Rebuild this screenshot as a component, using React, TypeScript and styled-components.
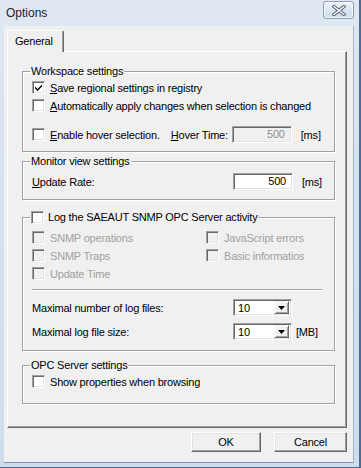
import React from 'react';
import styled, {createGlobalStyle} from "styled-components";

const GlobalStyle = createGlobalStyle`
  html, body {
    margin: 0;
    padding: 0;
    background: #ffffff;
  }
  body {
    font-family: "Liberation Sans", Arial, sans-serif;
    font-size: 11px;
    letter-spacing: -0.2px;
    color: #000000;
  }
`;

interface CheckProps {
  checked?: boolean,
  disabled?: boolean,
}

const CheckBox: React.FC<CheckProps> = ({checked, disabled}) => (
  <CheckBoxBox disabled={disabled}>
    {checked &&
      <svg width="9" height="9" viewBox="0 0 9 9">
        <path d="M1 3.5 L3.5 6 L8 1.5 L8 3.5 L3.5 8 L1 5.5 Z" fill="#000"/>
      </svg>
    }
  </CheckBoxBox>
);

const DropArrow = () => (
  <svg width="7" height="4" viewBox="0 0 7 4">
    <path d="M0 0 H7 L3.5 4 Z" fill="#000"/>
  </svg>
);

const Combo: React.FC<{value: string}> = ({value}) => (
  <ComboBox>
    <ComboText>{value}</ComboText>
    <ComboButton><DropArrow/></ComboButton>
  </ComboBox>
);

const App: React.FC = () => {
  return (
    <>
      <GlobalStyle/>
      <Frame>
        <TitleBar>
          <Title>Options</Title>
          <CloseButton>
            <svg width="14" height="11" viewBox="0 0 14 11">
              <path d="M2 1.5 L12 9.5 M12 1.5 L2 9.5" stroke="#4c5d73" strokeWidth="3.4" strokeLinecap="square" fill="none"/>
              <path d="M2 1.5 L12 9.5 M12 1.5 L2 9.5" stroke="#ffffff" strokeWidth="1.5" strokeLinecap="square" fill="none"/>
            </svg>
          </CloseButton>
        </TitleBar>

        <Client>
          <TabStrip>
            <Tab>General</Tab>
          </TabStrip>

          <TabPanel>
            <Group height={88} gapTop={12}>
              <Legend>Workspace settings</Legend>
              <CheckRow>
                <CheckBox checked/>
                <Label><u>S</u>ave regional settings in registry</Label>
              </CheckRow>
              <CheckRow>
                <CheckBox/>
                <Label><u>A</u>utomatically apply changes when selection is changed</Label>
              </CheckRow>
              <FieldRow gapTop={11}>
                <CheckBox/>
                <Label><u>E</u>nable hover selection.</Label>
                <InlineLabel><u>H</u>over Time:</InlineLabel>
                <NumberInput disabled>500</NumberInput>
                <Unit>[ms]</Unit>
              </FieldRow>
            </Group>

            <Group height={46} gapTop={2}>
              <Legend>Monitor view settings</Legend>
              <FieldRow gapTop={4}>
                <FieldLabel width={196}><u>U</u>pdate Rate:</FieldLabel>
                <NumberInput>500</NumberInput>
                <Unit>[ms]</Unit>
              </FieldRow>
            </Group>

            <Group height={141} gapTop={10}>
              <Legend>
                <CheckBox/>
                <Label>Log the SAEAUT SNMP OPC Server activity</Label>
              </Legend>
              <OptionGrid>
                <CheckRow>
                  <CheckBox disabled/>
                  <DisabledLabel>SNMP operations</DisabledLabel>
                </CheckRow>
                <CheckRow>
                  <CheckBox disabled/>
                  <DisabledLabel>JavaScript errors</DisabledLabel>
                </CheckRow>
                <CheckRow>
                  <CheckBox disabled/>
                  <DisabledLabel>SNMP Traps</DisabledLabel>
                </CheckRow>
                <CheckRow>
                  <CheckBox disabled/>
                  <DisabledLabel>Basic informatios</DisabledLabel>
                </CheckRow>
                <CheckRow>
                  <CheckBox disabled/>
                  <DisabledLabel>Update Time</DisabledLabel>
                </CheckRow>
              </OptionGrid>
              <Separator/>
              <ComboRow first>
                <FieldLabel width={201}>Maximal number of log files:</FieldLabel>
                <Combo value="10"/>
              </ComboRow>
              <ComboRow>
                <FieldLabel width={201}>Maximal log file size:</FieldLabel>
                <Combo value="10"/>
                <Unit>[MB]</Unit>
              </ComboRow>
            </Group>

            <Group height={46} gapTop={7}>
              <Legend>OPC Server settings</Legend>
              <CheckRow>
                <CheckBox/>
                <Label>Show properties when browsing</Label>
              </CheckRow>
            </Group>
          </TabPanel>

          <ButtonRow>
            <PushButton width={70}>OK</PushButton>
            <PushButton width={73}>Cancel</PushButton>
          </ButtonRow>
        </Client>
      </Frame>
    </>
  );
};

const Frame = styled.div`
  box-sizing: border-box;
  width: 361px;
  height: 468px;
  display: flex;
  flex-direction: column;
  padding: 0 5px 4px 4px;
  background: linear-gradient(180deg, #dfe8f2 0%, #d6e2ef 40%, #cfdcec 100%);
  border-right: 2px solid #4f6a8c;
  border-bottom: 1px solid #4f6a8c;
  overflow: hidden;
`;

const TitleBar = styled.div`
  height: 26px;
  display: flex;
  align-items: center;
  justify-content: space-between;
  padding: 0 0 0 2px;
`;

const Title = styled.div`
  font-size: 12px;
  letter-spacing: 0;
  color: #1e1e1e;
  margin-top: -1px;
`;

const CloseButton = styled.div`
  box-sizing: border-box;
  width: 31px;
  height: 18px;
  margin-top: -6px;
  display: flex;
  align-items: center;
  justify-content: center;
  border: 1px solid #8a9cb3;
  border-radius: 3px;
  background: linear-gradient(180deg, #eef3f9 0%, #dde6f1 50%, #d0dceb 100%);
  box-shadow: inset 0 0 0 1px rgba(255, 255, 255, 0.7);
`;

const Client = styled.div`
  flex: 1;
  display: flex;
  flex-direction: column;
  background: #f0f0f0;
  padding: 4px 6px 0 3px;
  border-right: 1px solid #9fb4cc;
  border-bottom: 1px solid #7c93ad;
`;

const TabStrip = styled.div`
  display: flex;
  height: 21px;
  position: relative;
  z-index: 1;
`;

const Tab = styled.div`
  box-sizing: border-box;
  height: 22px;
  width: 57px;
  padding: 4px 0 0 7px;
  background: #f0f0f0;
  border-top: 1px solid #ffffff;
  border-left: 1px solid #ffffff;
  border-right: 1px solid #696969;
  box-shadow: inset -1px 0 0 #a0a0a0;
  border-top-left-radius: 2px;
  border-top-right-radius: 2px;
`;

const TabPanel = styled.div`
  box-sizing: border-box;
  height: 377px;
  padding: 0 14px 0 14px;
  border-top: 1px solid #ffffff;
  border-left: 1px solid #ffffff;
  border-right: 1px solid #696969;
  border-bottom: 1px solid #696969;
  box-shadow: inset -1px -1px 0 #a0a0a0;
  display: flex;
  flex-direction: column;
`;

const Group = styled.fieldset<{height: number, gapTop: number}>`
  box-sizing: border-box;
  width: 313px;
  margin: ${props => props.gapTop}px 0 0 0;
  padding: 0 0 0 9px;
  min-height: ${props => props.height}px;
  border: 1px solid #a0a0a0;
  box-shadow: inset 1px 1px 0 #ffffff, 1px 1px 0 #ffffff;
  display: flex;
  flex-direction: column;
`;

const Legend = styled.legend`
  padding: 0 1px 0 1px;
  margin-left: -2px;
  display: flex;
  align-items: center;
  gap: 4px;
  line-height: 14px;
`;

const CheckBoxBox = styled.span<{disabled?: boolean}>`
  box-sizing: border-box;
  flex: none;
  width: 13px;
  height: 13px;
  display: inline-flex;
  align-items: center;
  justify-content: center;
  background: ${props => props.disabled ? '#f0f0f0' : '#ffffff'};
  border-top: 1px solid #a0a0a0;
  border-left: 1px solid #a0a0a0;
  border-right: 1px solid #ffffff;
  border-bottom: 1px solid #ffffff;
  box-shadow: inset 1px 1px 0 #696969, inset -1px -1px 0 #e3e3e3;
`;

const CheckRow = styled.div`
  display: flex;
  align-items: center;
  gap: 5px;
  height: 17px;
  margin-top: 1px;
`;

const FieldRow = styled.div<{gapTop: number}>`
  display: flex;
  align-items: center;
  gap: 5px;
  height: 19px;
  margin-top: ${props => props.gapTop}px;
`;

const Label = styled.span`
  white-space: nowrap;
`;

const DisabledLabel = styled.span`
  white-space: nowrap;
  color: #a0a0a0;
`;

const InlineLabel = styled.span`
  margin-left: 6px;
  width: 56px;
  white-space: nowrap;
`;

const FieldLabel = styled.span<{width: number}>`
  width: ${props => props.width}px;
  flex: none;
  white-space: nowrap;
`;

const NumberInput = styled.div<{disabled?: boolean}>`
  box-sizing: border-box;
  width: 60px;
  height: 17px;
  padding: 0 6px 0 0;
  text-align: right;
  line-height: 14px;
  background: ${props => props.disabled ? '#f0f0f0' : '#ffffff'};
  color: ${props => props.disabled ? '#8d8d8d' : '#000000'};
  border-top: 1px solid #a0a0a0;
  border-left: 1px solid #a0a0a0;
  border-right: 1px solid #ffffff;
  border-bottom: 1px solid #ffffff;
  box-shadow: inset 1px 1px 0 #696969, inset -1px -1px 0 #e3e3e3;
`;

const Unit = styled.span`
  margin-left: 4px;
  white-space: nowrap;
`;

const OptionGrid = styled.div`
  display: grid;
  grid-template-columns: 174px 1fr;
  margin-top: 4px;
`;

const Separator = styled.div`
  width: 290px;
  height: 1px;
  margin: 7px 0 0 0;
  background: #a0a0a0;
  box-shadow: 0 1px 0 #ffffff;
`;

const ComboRow = styled.div<{first?: boolean}>`
  display: flex;
  align-items: center;
  height: 17px;
  margin-top: ${props => props.first ? 9 : 7}px;
`;

const ComboBox = styled.div`
  box-sizing: border-box;
  width: 59px;
  height: 17px;
  display: flex;
  align-items: center;
  background: #ffffff;
  border-top: 1px solid #a0a0a0;
  border-left: 1px solid #a0a0a0;
  border-right: 1px solid #ffffff;
  border-bottom: 1px solid #ffffff;
  box-shadow: inset 1px 1px 0 #696969, inset -1px -1px 0 #e3e3e3;
  padding: 2px;
`;

const ComboText = styled.span`
  flex: 1;
  padding-left: 2px;
`;

const ComboButton = styled.span`
  box-sizing: border-box;
  width: 15px;
  height: 13px;
  display: flex;
  align-items: center;
  justify-content: center;
  background: #f0f0f0;
  border-top: 1px solid #f0f0f0;
  border-left: 1px solid #f0f0f0;
  border-right: 1px solid #696969;
  border-bottom: 1px solid #696969;
  box-shadow: inset 1px 1px 0 #ffffff, inset -1px -1px 0 #a0a0a0;
`;

const ButtonRow = styled.div`
  display: flex;
  justify-content: flex-end;
  gap: 13px;
  margin-top: 4px;
`;

const PushButton = styled.div<{width: number}>`
  box-sizing: border-box;
  width: ${props => props.width}px;
  height: 20px;
  display: flex;
  align-items: center;
  justify-content: center;
  background: #f0f0f0;
  border-top: 1px solid #ffffff;
  border-left: 1px solid #ffffff;
  border-right: 1px solid #696969;
  border-bottom: 1px solid #696969;
  box-shadow: inset -1px -1px 0 #a0a0a0, inset 1px 1px 0 #e3e3e3;
`;

export default App;
